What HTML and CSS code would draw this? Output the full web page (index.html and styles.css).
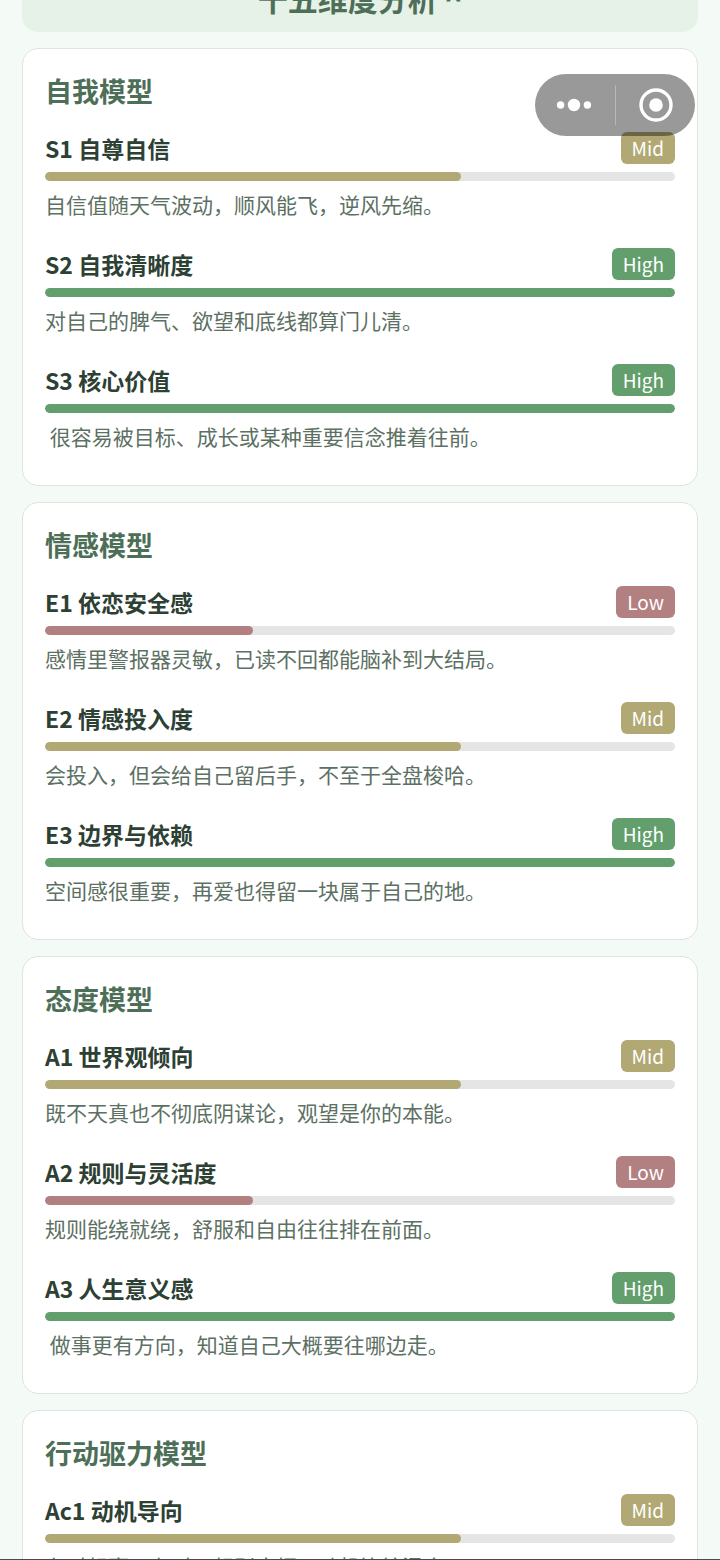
FILE: index.html
```html
<!DOCTYPE html>
<html lang="zh-CN">
<head>
  <meta charset="UTF-8" />
  <meta name="viewport" content="width=device-width, initial-scale=1.0"/>
  <title>十五维度分析</title>
  <link rel="stylesheet" href="styles.css">
</head>
<body>

  <div class="capsule">
    <button type="button" class="capsule-btn" aria-label="更多">
      <svg width="36" height="14" viewBox="0 0 36 14" fill="#fff">
        <circle cx="4.6" cy="7" r="3.7"/>
        <circle cx="18" cy="7" r="6.2"/>
        <circle cx="31.4" cy="7" r="3.7"/>
      </svg>
    </button>
    <span class="capsule-line"></span>
    <button type="button" class="capsule-btn" aria-label="关闭">
      <svg width="34" height="34" viewBox="0 0 34 34">
        <circle cx="17" cy="17" r="15" fill="none" stroke="#fff" stroke-width="3.4"/>
        <circle cx="17" cy="17" r="6.8" fill="#fff"/>
      </svg>
    </button>
  </div>

  <main class="page">
    <button type="button" class="toggle">十五维度分析 ^</button>

    <section class="card">
      <h2>自我模型</h2>
      <div class="item">
        <div class="row"><h3>S1 自尊自信</h3><span class="badge mid">Mid</span></div>
        <div class="bar"><div class="fill mid" style="width: 66%"></div></div>
        <p>自信值随天气波动，顺风能飞，逆风先缩。</p>
      </div>
      <div class="item">
        <div class="row"><h3>S2 自我清晰度</h3><span class="badge high">High</span></div>
        <div class="bar"><div class="fill high" style="width: 100%"></div></div>
        <p>对自己的脾气、欲望和底线都算门儿清。</p>
      </div>
      <div class="item">
        <div class="row"><h3>S3 核心价值</h3><span class="badge high">High</span></div>
        <div class="bar"><div class="fill high" style="width: 100%"></div></div>
        <p>&nbsp;很容易被目标、成长或某种重要信念推着往前。</p>
      </div>
    </section>

    <section class="card">
      <h2>情感模型</h2>
      <div class="item">
        <div class="row"><h3>E1 依恋安全感</h3><span class="badge low">Low</span></div>
        <div class="bar"><div class="fill low" style="width: 33%"></div></div>
        <p>感情里警报器灵敏，已读不回都能脑补到大结局。</p>
      </div>
      <div class="item">
        <div class="row"><h3>E2 情感投入度</h3><span class="badge mid">Mid</span></div>
        <div class="bar"><div class="fill mid" style="width: 66%"></div></div>
        <p>会投入，但会给自己留后手，不至于全盘梭哈。</p>
      </div>
      <div class="item">
        <div class="row"><h3>E3 边界与依赖</h3><span class="badge high">High</span></div>
        <div class="bar"><div class="fill high" style="width: 100%"></div></div>
        <p>空间感很重要，再爱也得留一块属于自己的地。</p>
      </div>
    </section>

    <section class="card">
      <h2>态度模型</h2>
      <div class="item">
        <div class="row"><h3>A1 世界观倾向</h3><span class="badge mid">Mid</span></div>
        <div class="bar"><div class="fill mid" style="width: 66%"></div></div>
        <p>既不天真也不彻底阴谋论，观望是你的本能。</p>
      </div>
      <div class="item">
        <div class="row"><h3>A2 规则与灵活度</h3><span class="badge low">Low</span></div>
        <div class="bar"><div class="fill low" style="width: 33%"></div></div>
        <p>规则能绕就绕，舒服和自由往往排在前面。</p>
      </div>
      <div class="item">
        <div class="row"><h3>A3 人生意义感</h3><span class="badge high">High</span></div>
        <div class="bar"><div class="fill high" style="width: 100%"></div></div>
        <p>&nbsp;做事更有方向，知道自己大概要往哪边走。</p>
      </div>
    </section>

    <section class="card">
      <h2>行动驱力模型</h2>
      <div class="item">
        <div class="row"><h3>Ac1 动机导向</h3><span class="badge mid">Mid</span></div>
        <div class="bar"><div class="fill mid" style="width: 66%"></div></div>
        <p>有时想赢，有时只想别麻烦，动机比较混合。</p>
      </div>
    </section>
  </main>

  <div class="bottom-edge"></div>

</body>
</html>
```
FILE: styles.css
```css
* {
  box-sizing: border-box;
}

html {
  height: 100%;
}

body {
  margin: 0;
  height: 100%;
  overflow: hidden;
  font-family: "Noto Sans CJK SC", sans-serif;
  background: #f4faf6;
  color: #2d4034;
}

h2,
h3,
p {
  margin: 0;
}

/* list opens slightly scrolled */
.page {
  display: flex;
  flex-direction: column;
  gap: 16px;
  margin-top: -32px;
  padding: 0 22px;
}

.toggle {
  width: 100%;
  height: 64px;
  padding: 0 0 4px;
  border: none;
  border-radius: 16px;
  background: #e6f1e8;
  color: #4d6f57;
  font-family: inherit;
  font-size: 30px;
  font-weight: 700;
  line-height: 44px;
  cursor: pointer;
}

.card {
  padding: 22px 22px 33px;
  border: 1px solid #dce6de;
  border-radius: 16px;
  background: #fff;
}

.card h2 {
  margin-bottom: 21px;
  color: #4d6f57;
  font-size: 27px;
  font-weight: 700;
  line-height: 40px;
}

.item + .item {
  margin-top: 28px;
}

.row {
  display: flex;
  justify-content: space-between;
  align-items: flex-start;
}

.row h3 {
  font-size: 23px;
  font-weight: 700;
  line-height: 32px;
}

.badge {
  padding: 0 11px;
  border-radius: 6px;
  color: #fff;
  font-size: 19px;
  line-height: 32px;
}

.bar {
  height: 9px;
  margin: 8px 0;
  border-radius: 5px;
  background: #e5e5e5;
  overflow: hidden;
}

.fill {
  height: 100%;
  border-radius: 5px;
}

.high {
  background: #639f6c;
}

.mid {
  background: #b2a874;
}

.low {
  background: #b28080;
}

.item p {
  color: #5c7063;
  font-size: 21px;
  line-height: 31px;
}

.capsule {
  position: fixed;
  top: 74px;
  right: 25px;
  z-index: 10;
  display: flex;
  align-items: center;
  width: 160px;
  height: 62px;
  border-radius: 31px;
  background: rgba(0, 0, 0, 0.4);
}

.capsule-btn {
  flex: 1;
  display: flex;
  align-items: center;
  justify-content: center;
  height: 100%;
  padding: 0;
  border: none;
  background: none;
  cursor: pointer;
}

.capsule-line {
  width: 1px;
  height: 40px;
  margin: 0 2px;
  background: rgba(255, 255, 255, 0.3);
}

.bottom-edge {
  position: fixed;
  left: 0;
  right: 0;
  bottom: 0;
  height: 1px;
  background: #4a4a4a;
}
```
